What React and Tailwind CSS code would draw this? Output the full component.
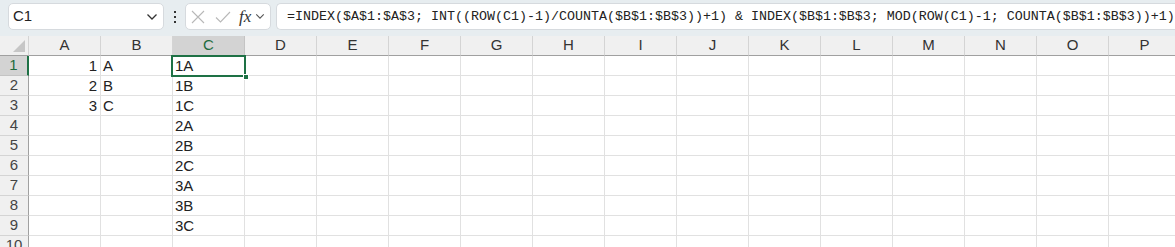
import React from "react";

const cols = ["A", "B", "C", "D", "E", "F", "G", "H", "I", "J", "K", "L", "M", "N", "O", "P"];
const rows = [1, 2, 3, 4, 5, 6, 7, 8, 9, 10];

const data = {
  "A1": "1", "A2": "2", "A3": "3",
  "B1": "A", "B2": "B", "B3": "C",
  "C1": "1A", "C2": "1B", "C3": "1C", "C4": "2A", "C5": "2B",
  "C6": "2C", "C7": "3A", "C8": "3B", "C9": "3C",
};

const formula =
  "=INDEX($A$1:$A$3; INT((ROW(C1)-1)/COUNTA($B$1:$B$3))+1) & INDEX($B$1:$B$3; MOD(ROW(C1)-1; COUNTA($B$1:$B$3))+1)";

function Chevron({ className }) {
  return (
    <svg className={className} viewBox="0 0 12 8" fill="none" stroke="currentColor" strokeWidth="1.3">
      <path d="M1.5 1.5 L6 6 L10.5 1.5" />
    </svg>
  );
}

function Toolbar() {
  return (
    <div className="h-[36px] bg-[#e7edf0] flex items-start pt-[3px] pl-[8px] gap-0">
      {/* name box */}
      <div className="w-[156px] h-[27px] bg-white rounded-[5px] border border-[#d6dade] flex items-center justify-between pl-[4px] pr-[4px]">
        <span className="text-[15px] text-[#222]">C1</span>
        <Chevron className="w-[12px] h-[8px] text-[#333] mr-[1px]" />
      </div>
      {/* dots */}
      <div className="w-[21px] h-[27px] flex flex-col items-center justify-center gap-[3px]">
        <span className="w-[2px] h-[2px] bg-[#333]" />
        <span className="w-[2px] h-[2px] bg-[#333]" />
        <span className="w-[2px] h-[2px] bg-[#333]" />
      </div>
      {/* fx box */}
      <div className="w-[86px] h-[27px] bg-white rounded-[5px] border border-[#d6dade] flex items-center pl-[5px]">
        <svg className="w-[14px] h-[14px] text-[#b8b8b8]" viewBox="0 0 14 14" stroke="currentColor" strokeWidth="1.1">
          <path d="M1 1 L13 13 M13 1 L1 13" />
        </svg>
        <svg className="w-[16px] h-[14px] ml-[10px] text-[#b8b8b8]" viewBox="0 0 16 14" fill="none" stroke="currentColor" strokeWidth="1.1">
          <path d="M1 7.5 L5.5 12 L15 2" />
        </svg>
        <span className="ml-[8px] text-[17px] italic text-[#333] leading-none" style={{ fontFamily: '"Liberation Serif", serif' }}>
          fx
        </span>
        <Chevron className="w-[10px] h-[7px] ml-[4px] text-[#555]" />
      </div>
      {/* formula box */}
      <div className="ml-[5px] flex-1 h-[27px] bg-white rounded-l-[5px] border border-r-0 border-[#d6dade] flex items-center pl-[10px] overflow-hidden">
        <span className="text-[13.33px] text-[#222] whitespace-pre" style={{ fontFamily: '"Liberation Mono", monospace' }}>
          {formula}
        </span>
      </div>
    </div>
  );
}

function Grid() {
  return (
    <div className="relative grid grid-cols-[29px_repeat(16,72px)] auto-rows-[20px] text-[15px] text-[#222]">
      {/* corner */}
      <div className="relative bg-[#f0f0f0] border-r border-b border-r-[#d4d4d4] border-b-[#a0a0a0]">
        <div className="absolute right-[3px] bottom-[3px] w-0 h-0 border-l-[12px] border-l-transparent border-b-[12px] border-b-[#c6c6c6]" />
      </div>
      {cols.map((c) => (
        <div
          key={c}
          className={
            c === "C"
              ? "bg-[#d3d3d3] border-r border-b border-r-[#c4c4c4] border-b-[#a0a0a0] flex items-center justify-center text-[#1f6b3d]"
              : "bg-[#f0f0f0] border-r border-b border-r-[#d4d4d4] border-b-[#a0a0a0] flex items-center justify-center text-[#333]"
          }
        >
          {c}
        </div>
      ))}
      {rows.map((r) => (
        <React.Fragment key={r}>
          <div
            className={
              r === 1
                ? "bg-[#d3d3d3] border-b border-b-[#c4c4c4] border-r-2 border-r-[#1e7145] flex items-center justify-center text-[#1f6b3d]"
                : "bg-[#f0f0f0] border-b border-b-[#d4d4d4] border-r border-r-[#a0a0a0] flex items-center justify-center text-[#444]"
            }
          >
            {r}
          </div>
          {cols.map((c) => {
            const v = data[c + r] || "";
            const num = /^\d+$/.test(v);
            return (
              <div
                key={c}
                className={
                  num
                    ? "border-r border-b border-[#e1e1e1] flex items-center justify-end pr-[3px] leading-none"
                    : "border-r border-b border-[#e1e1e1] flex items-center pl-[2px] leading-none"
                }
              >
                {v}
              </div>
            );
          })}
        </React.Fragment>
      ))}
      {/* active cell selection */}
      <div className="absolute left-[171px] top-[19px] w-[75px] h-[22px] border-2 border-[#1e7145] pointer-events-none" />
      <div className="absolute left-[243px] top-[38px] w-[6px] h-[6px] bg-[#1e7145] border border-white" />
    </div>
  );
}

export default function App() {
  return (
    <div className="w-[1175px] h-[247px] overflow-hidden bg-white" style={{ fontFamily: '"Liberation Sans", Arial, sans-serif' }}>
      <Toolbar />
      <Grid />
    </div>
  );
}
